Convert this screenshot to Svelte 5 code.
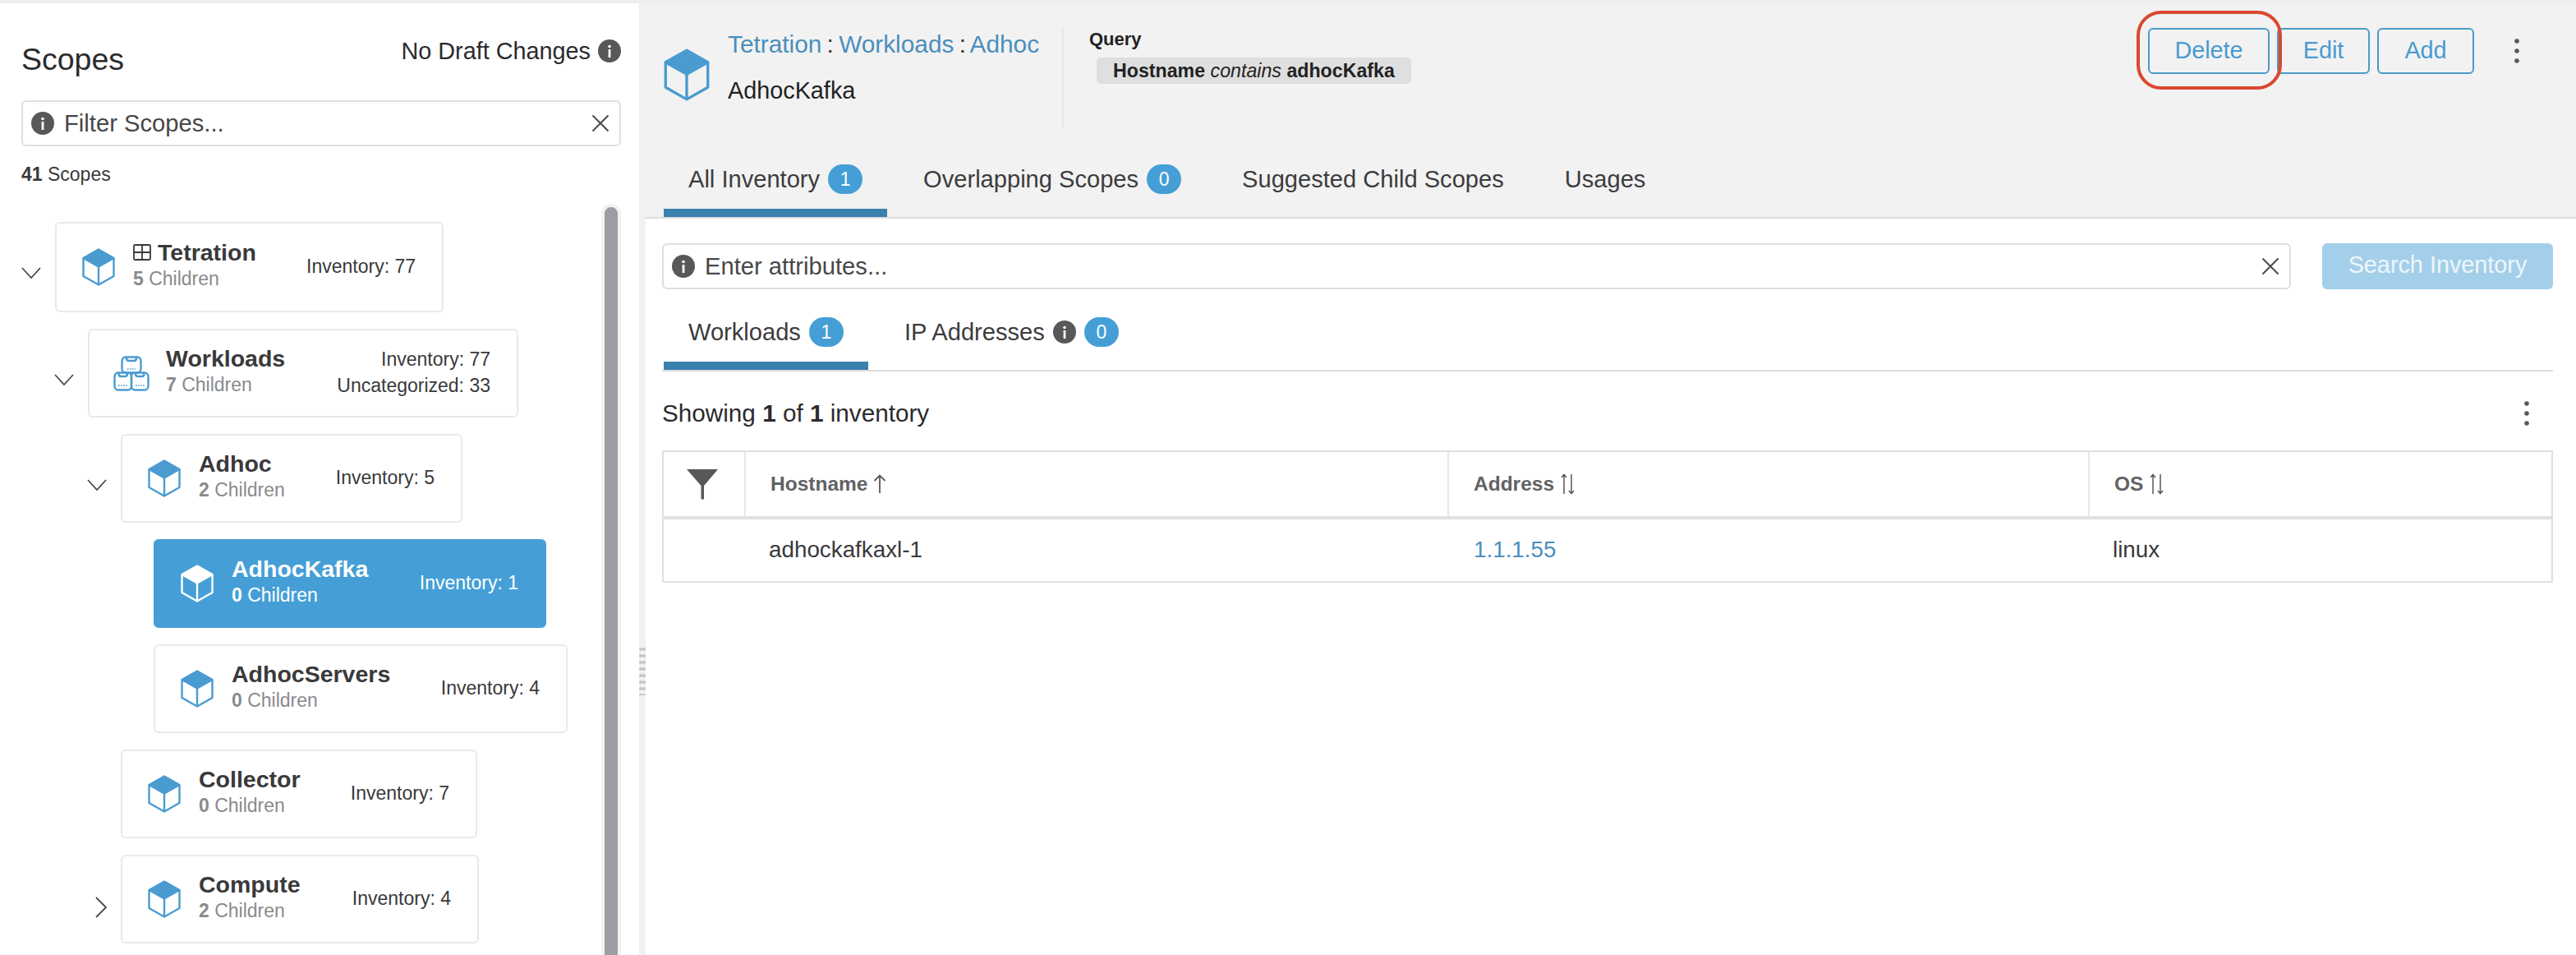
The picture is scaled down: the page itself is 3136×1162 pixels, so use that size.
<script>
  const scopes = [
    { name: "Tetration", children: 5, depth: 0, width: 473, open: true, grid: true, lines: ["Inventory: 77"], tall: true },
    { name: "Workloads", children: 7, depth: 1, width: 524, open: true, stack: true, lines: ["Inventory: 77", "Uncategorized: 33"] },
    { name: "Adhoc", children: 2, depth: 2, width: 416, open: true, lines: ["Inventory: 5"] },
    { name: "AdhocKafka", children: 0, depth: 3, width: 478, selected: true, lines: ["Inventory: 1"] },
    { name: "AdhocServers", children: 0, depth: 3, width: 504, lines: ["Inventory: 4"] },
    { name: "Collector", children: 0, depth: 2, width: 434, lines: ["Inventory: 7"] },
    { name: "Compute", children: 2, depth: 2, width: 436, closed: true, lines: ["Inventory: 4"] }
  ];
</script>

{#snippet info(size = 28)}
  <svg class="info" width={size} height={size} viewBox="0 0 28 28">
    <circle cx="14" cy="14" r="14" fill="#58585b" />
    <circle cx="14" cy="8.5" r="1.8" fill="#fff" />
    <rect x="12.6" y="12" width="2.8" height="10" fill="#fff" />
  </svg>
{/snippet}

{#snippet cube(w, h, color)}
  <svg class="cube" width={w} height={h} viewBox="0 0 40 46">
    <path d="M20 1.5 38.5 12 20 22.5 1.5 12Z" fill={color} stroke={color} stroke-width="2.4" stroke-linejoin="round" />
    <path d="M1.5 12V34L20 44.5 38.5 34V12M20 22.5V44.5" fill="none" stroke={color} stroke-width="2.4" stroke-linejoin="round" />
  </svg>
{/snippet}

{#snippet close()}
  <svg class="close" width="22" height="22" viewBox="0 0 22 22">
    <path d="M1.5 1.5 20.5 20.5M20.5 1.5 1.5 20.5" stroke="#4a4a4c" stroke-width="2" fill="none" />
  </svg>
{/snippet}

{#snippet dots()}
  <svg width="8" height="32" viewBox="0 0 8 32">
    <circle cx="4" cy="4" r="2.8" fill="#58585b" />
    <circle cx="4" cy="16" r="2.8" fill="#58585b" />
    <circle cx="4" cy="28" r="2.8" fill="#58585b" />
  </svg>
{/snippet}

{#snippet sortBoth()}
  <svg class="sort" width="20" height="26" viewBox="0 0 20 26">
    <path d="M5 25V2M2 5 5 1.5 8 5M14 1V24M11 21 14 24.5 17 21" stroke="#58585b" stroke-width="1.5" fill="none" />
  </svg>
{/snippet}

<div class="page">
  <aside class="left">
    <div class="left-top">
      <h1>Scopes</h1>
      <div class="draft">No Draft Changes {@render info()}</div>
    </div>
    <div class="filter">
      {@render info()}
      <span class="ph">Filter Scopes...</span>
      {@render close()}
    </div>
    <div class="count"><b>41</b> Scopes</div>

    <div class="tree-wrap">
      <div class="tree">
        {#each scopes as s}
          <div class="row" class:tall={s.tall} style="margin-left: {s.depth * 40}px">
            <div class="chev">
              {#if s.open}
                <svg width="24" height="14" viewBox="0 0 24 14"><path d="M1 1 12 13 23 1" fill="none" stroke="#4a4a4c" stroke-width="1.8" /></svg>
              {:else if s.closed}
                <svg class="right" width="14" height="26" viewBox="0 0 14 26"><path d="M1 1 13 13 1 25" fill="none" stroke="#4a4a4c" stroke-width="1.8" /></svg>
              {/if}
            </div>
            <div class="card" class:selected={s.selected} style="width: {s.width}px">
              {#if s.stack}
                <svg class="stack" width="44" height="43" viewBox="0 0 44 43" fill="none" stroke="#4a9bd0" stroke-width="2.4">
                  <rect x="10.5" y="1.5" width="23" height="19" rx="4.5" />
                  <path d="M16 1.5V3Q16 6 19 6H25Q28 6 28 3V1.5" />
                  <rect x="1.5" y="20.5" width="20.5" height="21" rx="4.5" />
                  <path d="M6.5 20.5V22Q6.5 25 9.5 25H14Q17 25 17 22V20.5" />
                  <rect x="22" y="20.5" width="20.5" height="21" rx="4.5" />
                  <path d="M27 20.5V22Q27 25 30 25H34.5Q37.5 25 37.5 22V20.5" />
                  <path d="M17 16H27M6 36H17M27 36H38" stroke-width="1.6" stroke-dasharray="1.6 1.4" />
                </svg>
              {:else}
                {@render cube(40, 46, s.selected ? "#fff" : "#4a9bd0")}
              {/if}
              <div class="names">
                <div class="name">
                  {#if s.grid}
                    <svg class="grid" width="22" height="20" viewBox="0 0 22 20"><path d="M2.5 1H19.5Q21 1 21 2.5V17.5Q21 19 19.5 19H2.5Q1 19 1 17.5V2.5Q1 1 2.5 1ZM11 1V19M1 10H21" fill="none" stroke="#39393b" stroke-width="1.8" /></svg>
                  {/if}
                  {s.name}
                </div>
                <div class="kids"><b>{s.children}</b> Children</div>
              </div>
              <div class="stats">
                {#each s.lines as line}
                  <div>{line}</div>
                {/each}
              </div>
            </div>
          </div>
        {/each}
      </div>
      <div class="track"><div class="thumb"></div></div>
    </div>
  </aside>

  <div class="splitter"><div class="grip"></div></div>

  <main class="right-pane">
    <header class="head">
      <div class="head-top">
        {@render cube(56, 64, "#4a9bd0")}
        <div class="crumbs">
          <div class="path">
            <a href="#t">Tetration</a> : <a href="#w">Workloads</a> : <a href="#a">Adhoc</a>
          </div>
          <div class="current">AdhocKafka</div>
        </div>
        <div class="query">
          <div class="q-label">Query</div>
          <div class="chip"><b>Hostname</b> <i>contains</i> <b>adhocKafka</b></div>
        </div>
        <div class="actions">
          <div class="marked">
            <button class="btn btn-delete">Delete</button>
            <div class="ring"></div>
          </div>
          <button class="btn btn-edit">Edit</button>
          <button class="btn btn-add">Add</button>
          <div class="more">{@render dots()}</div>
        </div>
      </div>
      <nav class="tabs top-tabs">
        <div class="tab active">All Inventory <span class="badge">1</span></div>
        <div class="tab">Overlapping Scopes <span class="badge">0</span></div>
        <div class="tab">Suggested Child Scopes</div>
        <div class="tab">Usages</div>
      </nav>
    </header>

    <section class="body">
      <div class="search-row">
        <div class="attr">
          {@render info()}
          <span class="ph">Enter attributes...</span>
          {@render close()}
        </div>
        <button class="search-btn">Search Inventory</button>
      </div>

      <nav class="tabs sub-tabs">
        <div class="tab active">Workloads <span class="badge">1</span></div>
        <div class="tab">IP Addresses {@render info()} <span class="badge">0</span></div>
      </nav>

      <div class="showing">
        <span>Showing <b>1</b> of <b>1</b> inventory</span>
        {@render dots()}
      </div>

      <div class="table">
        <div class="cell th filter-col">
          <svg width="38" height="37" viewBox="0 0 38 37"><path d="M0 0H38L21 20V36.5H17.5V20Z" fill="#58585b" /></svg>
        </div>
        <div class="cell th">Hostname
          <svg class="sort" width="16" height="24" viewBox="0 0 16 24"><path d="M8 23V2M1.5 8 8 1.5 14.5 8" stroke="#58585b" stroke-width="1.8" fill="none" /></svg>
        </div>
        <div class="cell th">Address {@render sortBoth()}</div>
        <div class="cell th">OS {@render sortBoth()}</div>
        <div class="cell td"></div>
        <div class="cell td">adhockafkaxl-1</div>
        <div class="cell td"><a class="ip" href="#ip">1.1.1.55</a></div>
        <div class="cell td">linux</div>
      </div>
    </section>
  </main>
</div>

<style>
  :global(body) {
    margin: 0;
    background: #fff;
  }
  .page {
    display: flex;
    height: 1158px;
    border-top: 4px solid #eeeeee;
    overflow: hidden;
    font-family: "Liberation Sans", Arial, sans-serif;
    font-size: 28.8px;
    color: #39393b;
  }
  a {
    color: #4a8fbd;
    text-decoration: none;
  }
  svg {
    display: block;
    flex: none;
  }

  /* left side */
  .left {
    width: 778px;
    flex: none;
    box-sizing: border-box;
    padding: 0 22px 0 26px;
    display: flex;
    flex-direction: column;
  }
  .left-top {
    display: flex;
    justify-content: space-between;
    height: 118px;
  }
  h1 {
    margin: 47px 0 0;
    font-size: 37.5px;
    line-height: 42px;
    font-weight: 400;
    color: #2b2b2d;
  }
  .draft {
    display: flex;
    align-items: center;
    gap: 9px;
    height: 30px;
    margin-top: 43px;
    color: #2b2b2d;
  }
  .filter {
    height: 56px;
    box-sizing: border-box;
    border: 2px solid #dfdfdf;
    border-radius: 6px;
    display: flex;
    align-items: center;
    gap: 12px;
    padding: 0 12px 0 10px;
  }
  .ph {
    flex: 1;
    font-size: 29.2px;
    color: #47474a;
  }
  .count {
    margin-top: 20px;
    height: 28px;
    line-height: 28px;
    font-size: 23px;
  }
  .tree-wrap {
    margin-top: 22px;
    flex: 1;
    min-height: 0;
    display: flex;
    justify-content: space-between;
  }
  .tree {
    padding-top: 22px;
    display: flex;
    flex-direction: column;
    gap: 20px;
  }
  .row {
    display: flex;
    flex: none;
    height: 108px;
  }
  .row.tall {
    height: 110px;
  }
  .chev {
    width: 41px;
    flex: none;
    padding-top: 55px;
    box-sizing: border-box;
  }
  .chev .right {
    margin-left: 10px;
    margin-top: -4px;
  }
  .card {
    box-sizing: border-box;
    border: 2px solid #e9e9ec;
    border-radius: 6px;
    display: flex;
    align-items: center;
    padding: 0 32px 0 31px;
    background: #fff;
  }
  .card.selected {
    background: #459fd6;
    border-color: #459fd6;
    color: #fff;
  }
  .cube {
    flex: none;
  }
  .card .cube {
    margin-right: 22px;
  }
  .stack {
    margin-left: -2px;
    margin-right: 20px;
  }
  .names {
    flex: 1;
    margin-top: -4px;
  }
  .name {
    font-size: 28.5px;
    line-height: 32px;
    font-weight: 700;
    display: flex;
    align-items: center;
    gap: 8px;
  }
  .kids {
    font-size: 23px;
    line-height: 32px;
    color: #8a8a8d;
  }
  .selected .kids {
    color: #fff;
  }
  .stats {
    font-size: 23px;
    line-height: 32px;
    text-align: right;
    margin-top: -2px;
  }
  .track {
    width: 24px;
    flex: none;
    background: #f2f2f2;
    border-radius: 12px 12px 0 0;
    padding: 4px 4px 0;
    box-sizing: border-box;
  }
  .thumb {
    height: 100%;
    background: #9c9ca2;
    border-radius: 8px 8px 0 0;
  }
  .splitter {
    width: 8px;
    flex: none;
    background: #f1f1f1;
  }
  .grip {
    margin-top: 782px;
    height: 60px;
    background-image: radial-gradient(circle, #c6c6c8 1.9px, transparent 2.2px);
    background-size: 4px 8px;
  }

  /* right side */
  .right-pane {
    flex: 1;
    min-width: 0;
  }
  .head {
    height: 260px;
    background: #f2f2f2;
    border-bottom: 2px solid #dcdcdc;
    box-sizing: content-box;
    padding-left: 22px;
  }
  .head-top {
    height: 186px;
    display: flex;
    align-items: flex-start;
  }
  .head-top > .cube {
    margin-top: 55px;
  }
  .crumbs {
    margin-left: 22px;
    margin-top: 33px;
    width: 407px;
  }
  .path {
    font-size: 29.8px;
    line-height: 34px;
    word-spacing: -2px;
    color: #39393b;
  }
  .current {
    margin-top: 22px;
    font-size: 28.8px;
    line-height: 34px;
    color: #222;
  }
  .query {
    border-left: 2px solid #e8e8e8;
    height: 123px;
    margin-top: 29px;
    padding-left: 31px;
  }
  .q-label {
    font-size: 22px;
    font-weight: 700;
    line-height: 30px;
    color: #222;
  }
  .chip {
    margin: 7px 0 0 9px;
    height: 32px;
    line-height: 32px;
    padding: 0 20px;
    background: #dfdfdf;
    border-radius: 5px;
    font-size: 23.2px;
    color: #222;
  }
  .actions {
    margin-left: auto;
    margin-top: 30px;
    display: flex;
    align-items: flex-start;
  }
  .marked {
    position: relative;
    margin-right: 9px;
  }
  .ring {
    position: absolute;
    left: -14px;
    right: -15px;
    top: -21px;
    bottom: -19px;
    border: 4px solid #d9482f;
    border-radius: 30px;
    pointer-events: none;
  }
  .btn {
    height: 56px;
    box-sizing: border-box;
    background: transparent;
    border: 2px solid #4a9bc8;
    border-radius: 6px;
    font: inherit;
    color: #4a9bcf;
    padding: 0 0 2px;
  }
  .btn-delete {
    width: 148px;
    display: block;
  }
  .btn-edit {
    width: 113px;
    margin-right: 9px;
  }
  .btn-add {
    width: 118px;
  }
  .more {
    margin: 12px 68px 0 48px;
  }

  .tabs {
    display: flex;
    gap: 14px;
    font-size: 29.1px;
  }
  .tab {
    box-sizing: border-box;
    display: flex;
    align-items: center;
    padding: 0 30px;
    height: 74px;
    padding-bottom: 8px;
    gap: 10px;
    border-bottom: 10px solid transparent;
    white-space: nowrap;
    color: #3c3c3e;
  }
  .tab.active {
    border-bottom-color: #3a80ad;
  }
  .badge {
    width: 42px;
    height: 36px;
    border-radius: 18px;
    background: #459fd6;
    color: #fff;
    font-size: 23px;
    line-height: 36px;
    text-align: center;
    flex: none;
  }

  .body {
    padding: 30px 28px 0 20px;
  }
  .search-row {
    display: flex;
    gap: 38px;
    height: 56px;
  }
  .attr {
    flex: 1;
    box-sizing: border-box;
    border: 2px solid #dfdfdf;
    border-radius: 6px;
    display: flex;
    align-items: center;
    gap: 12px;
    padding: 0 12px 0 10px;
  }
  .search-btn {
    width: 281px;
    border: none;
    border-radius: 6px;
    background: #a4cfea;
    color: #eef6fb;
    font: inherit;
    padding: 0 0 4px;
  }
  .sub-tabs {
    margin-top: 26px;
    border-bottom: 2px solid #dcdcdc;
    padding-left: 2px;
  }
  .sub-tabs .tab {
    height: 72px;
    padding-bottom: 10px;
  }
  .showing {
    display: flex;
    justify-content: space-between;
    align-items: center;
    box-sizing: border-box;
    height: 96px;
    padding: 6px 28px 0 0;
    font-size: 29.7px;
    color: #2b2b2d;
  }
  .table {
    display: grid;
    grid-template-columns: 98px 856px 780px 1fr;
    border: 2px solid #e0e0e0;
    width: 2302px;
    box-sizing: border-box;
  }
  .cell {
    display: flex;
    align-items: center;
    gap: 7px;
    box-sizing: border-box;
    padding-left: 30px;
  }
  .th {
    height: 82px;
    border-bottom: 4px solid #e0e0e0;
    border-left: 2px solid #e6e6e6;
    font-size: 24.5px;
    font-weight: 700;
    color: #626265;
  }
  .th.filter-col {
    border-left: none;
    padding-left: 28px;
  }
  .td {
    height: 75px;
    padding-bottom: 2px;
    font-size: 27.8px;
    color: #39393b;
  }
  .ip {
    margin-left: 2px;
  }
</style>
